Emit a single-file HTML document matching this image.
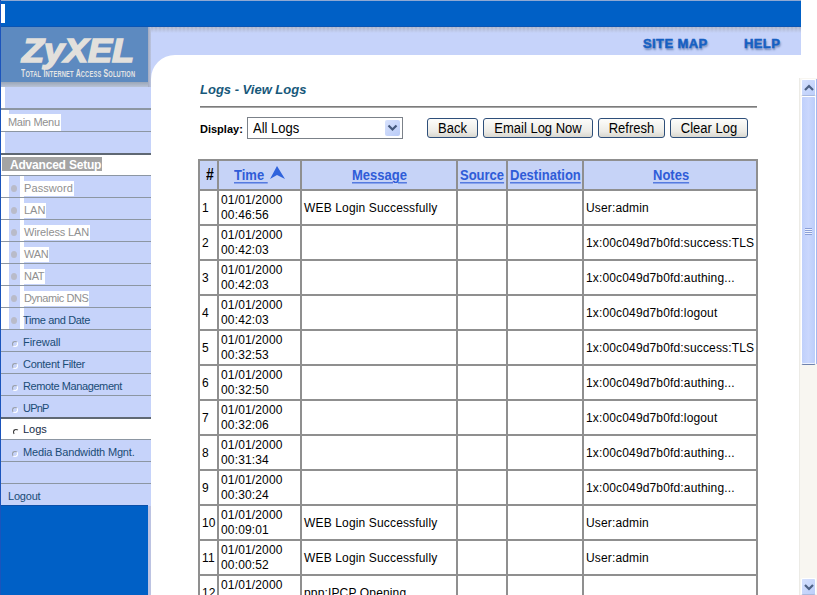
<!DOCTYPE html>
<html><head><meta charset="utf-8">
<style>
*{margin:0;padding:0;box-sizing:border-box}
html,body{width:817px;height:595px;overflow:hidden;background:#fff;font-family:"Liberation Sans",sans-serif}
.a{position:absolute}
#topbar{left:0;top:0;width:801px;height:27px;background:#0060c6;border-top:1px solid #8fa9d3;border-bottom:1px solid #0b55b4}
#topw{left:1px;top:4px;width:4px;height:19px;background:#fff}
#leftedge{left:0;top:0;width:1px;height:595px;background:#1b54bc}
#logo{left:0;top:27px;width:148px;height:55px;background:#5d8ac0}
#logoshadowb{left:0;top:82px;width:151px;height:5px;background:linear-gradient(#9aa6b8,#b9c3d6)}
#logoshadowr{left:148px;top:27px;width:3px;height:60px;background:linear-gradient(90deg,#a3abbf,#bcc5e0)}
#strip{left:151px;top:27px;width:650px;height:28px;background:#c6d3fa}
#stripsh{left:151px;top:27px;width:650px;height:6px;background:linear-gradient(rgba(198,211,250,0) 0%,#c6d3fa 100%),repeating-linear-gradient(90deg,#adb4c8 0 2px,#b7bed2 2px 4px)}
#content{left:151px;top:55px;width:649px;height:540px;background:#fff;border-top-left-radius:24px}
#corner{left:151px;top:55px;width:30px;height:30px;background:#c6d3fa}
.nav{font:bold 13px "Liberation Sans",sans-serif;letter-spacing:.4px;color:#1660c2;-webkit-text-stroke:.5px #1660c2;text-shadow:1px 2px 2px rgba(20,50,110,.5)}
/* sidebar */
#side{left:1px;top:87px;width:150px;height:419px;background:#c6d3fa}
.sep{position:absolute;left:1px;width:150px;background:#8c96a2}
.wcol{position:absolute;background:#fff}
.mt{position:absolute;font-size:11px;white-space:nowrap;line-height:13px}
.g{color:#909090;background:#fff}
.b{color:#1a4c76;letter-spacing:-.2px}
.ico{position:absolute;width:6px;height:6px;border-radius:50%;border:1px solid #9aa0a8;border-bottom-color:#fff;border-right-color:#fff}
#sideblue{left:0;top:505px;width:148px;height:90px;background:#0060c6;border-top:1px solid #0b4fa8}
#sidebluer{left:148px;top:506px;width:3px;height:89px;background:#c6d3fa}
/* content */
#title{left:200px;top:82px;font:italic bold 13px "Liberation Sans",sans-serif;color:#17587a;white-space:nowrap}
#hr{left:200px;top:106px;width:557px;height:2px;background:linear-gradient(#7c7c7c 50%,#a6a6a6 50%)}
#disp{left:200px;top:123px;font:bold 11px "Liberation Sans",sans-serif;color:#000}
#sel{left:247px;top:117px;width:156px;height:22px;border:1px solid #7b8189;background:#fff}
#seltxt{left:253px;top:121px;font-size:13px;color:#000;white-space:nowrap}
#selbtn{left:385px;top:120px;width:15px;height:16px;background:linear-gradient(135deg,#d8e2fd,#b9cbf7);border-radius:2px}
.btn{position:absolute;top:118px;height:20px;border:1px solid #2e4f7a;border-radius:3px;background:linear-gradient(#fdfdfb,#ecebe6 70%,#d9d7cf);font-size:13px;color:#000;text-align:center;line-height:19px}
/* table */
#tbl{left:198px;top:159px;width:561px;height:436px;background:#fff}
.hl{position:absolute;background:#8f8f8f}
.th{position:absolute;top:161px;height:28px;background:#c6d3f7}
.hd{position:absolute;font:bold 13px "Liberation Sans",sans-serif;color:#2f5cd8;text-decoration:underline;white-space:nowrap;top:168px;transform:scaleY(1.13);transform-origin:0 12px;text-underline-offset:2px}
.td{position:absolute;font-size:12px;color:#000;white-space:nowrap;line-height:14px;letter-spacing:.15px}
#scroll{left:799px;top:78px;width:18px;height:517px;background:#f8f6f1}
#logotxt{left:22px;top:32px;font:italic bold 33px "Liberation Sans",sans-serif;color:#e2e0dc;-webkit-text-stroke:1.6px #e2e0dc;transform:scaleX(1.09);transform-origin:0 0;line-height:38px;white-space:nowrap}
#logosub{left:21px;top:69px;font:bold 10px "Liberation Sans",sans-serif;color:#e4e4e4;white-space:nowrap;transform:scaleX(.685);transform-origin:0 0;line-height:10px;letter-spacing:.3px}
#logosub span{font-size:8.3px}
#adv{left:2px;top:157px;width:100px;height:14px;background:#a4a4a4;color:#fff;font:bold 12px "Liberation Sans",sans-serif;line-height:17px;padding-left:8px;letter-spacing:-.2px;white-space:nowrap}
.k{color:#152c46}
.ico2{position:absolute;width:6px;height:7px;border-radius:50%;background:#b9bbc9}
.sel{border-width:1.5px;border-color:#383838 #fff #fff #383838}
.sbtn{left:801px;width:15px;height:17px;border-bottom-color:#a9b9de!important;background:linear-gradient(135deg,#d5e0fd,#bccefa);border:1px solid #fff;border-radius:2px}
.sbtn svg{position:absolute;left:0;top:0}
#thumb{left:801px;top:96px;width:15px;height:269px;background:linear-gradient(90deg,#c0d0fb,#cad7fd 50%,#bccdfa);border:1px solid #fff;border-bottom:1px solid #6f82ad;box-shadow:inset 0 -1px 0 #eef2ff;border-radius:2px}
#grip{position:absolute;left:3px;top:131px;width:7px;height:7px;background:repeating-linear-gradient(#8b9fd8 0 1px,#eef2fd 1px 2px)}
#selbtn svg{position:absolute;left:0;top:0}

.btn span{display:inline-block;transform:scaleY(1.12);transform-origin:0 14px}
#seltxt{transform:scaleY(1.1);transform-origin:0 12px}

</style></head><body>
<div class="a" id="topbar"></div>
<div class="a" id="topw"></div>
<div class="a" id="logo"></div>
<div class="a" id="logotxt">ZyXEL</div>
<div class="a" id="logosub">T<span>OTAL</span> I<span>NTERNET</span> A<span>CCESS</span> S<span>OLUTION</span></div>
<div class="a" id="logoshadowb"></div>
<div class="a" id="logoshadowr"></div>
<div class="a" id="strip"></div>
<div class="a" id="stripsh"></div>
<div class="a" id="corner"></div>
<div class="a" id="content"></div>
<div class="a nav" style="left:643px;top:36px">SITE MAP</div>
<div class="a nav" style="left:744px;top:36px">HELP</div>
<div class="a" id="side"></div>
<div class="wcol" style="left:1px;top:87px;width:4px;height:21px"></div>
<div class="wcol" style="left:1px;top:110px;width:8px;height:21px"></div>
<div class="mt g" style="left:8px;top:114px;padding:2px 1px 2px 0;letter-spacing:-.3px">Main Menu</div>
<div class="wcol" style="left:1px;top:132px;width:4px;height:21px"></div>
<div class="wcol" style="left:1px;top:155px;width:150px;height:20px"></div>
<div class="a" id="adv">Advanced Setup</div>
<div class="wcol" style="left:1px;top:176px;width:8px;height:21px"></div>
<div class="wcol" style="left:20px;top:176px;width:4px;height:21px"></div>
<div class="ico2" style="left:11px;top:185px"></div>
<div class="mt g" style="left:24px;top:181px;padding:1px 1px 1px 0;letter-spacing:0.09px">Password</div>
<div class="wcol" style="left:1px;top:198px;width:8px;height:21px"></div>
<div class="wcol" style="left:20px;top:198px;width:4px;height:21px"></div>
<div class="ico2" style="left:11px;top:207px"></div>
<div class="mt g" style="left:24px;top:203px;padding:1px 1px 1px 0;letter-spacing:0px">LAN</div>
<div class="wcol" style="left:1px;top:220px;width:8px;height:21px"></div>
<div class="wcol" style="left:20px;top:220px;width:4px;height:21px"></div>
<div class="ico2" style="left:11px;top:229px"></div>
<div class="mt g" style="left:24px;top:225px;padding:1px 1px 1px 0;letter-spacing:-0.13px">Wireless LAN</div>
<div class="wcol" style="left:1px;top:242px;width:8px;height:21px"></div>
<div class="wcol" style="left:20px;top:242px;width:4px;height:21px"></div>
<div class="ico2" style="left:11px;top:251px"></div>
<div class="mt g" style="left:24px;top:247px;padding:1px 1px 1px 0;letter-spacing:-0.3px">WAN</div>
<div class="wcol" style="left:1px;top:264px;width:8px;height:21px"></div>
<div class="wcol" style="left:20px;top:264px;width:4px;height:21px"></div>
<div class="ico2" style="left:11px;top:273px"></div>
<div class="mt g" style="left:24px;top:269px;padding:1px 1px 1px 0;letter-spacing:-0.3px">NAT</div>
<div class="wcol" style="left:1px;top:286px;width:8px;height:21px"></div>
<div class="wcol" style="left:20px;top:286px;width:4px;height:21px"></div>
<div class="ico2" style="left:11px;top:295px"></div>
<div class="mt g" style="left:24px;top:291px;padding:1px 1px 1px 0;letter-spacing:-0.43px">Dynamic DNS</div>
<div class="wcol" style="left:1px;top:308px;width:8px;height:21px"></div>
<div class="wcol" style="left:20px;top:308px;width:4px;height:21px"></div>
<div class="ico2" style="left:11px;top:317px"></div>
<div class="mt b" style="left:23px;top:314px;letter-spacing:-0.36px">Time and Date</div>
<div class="ico" style="left:12px;top:341px"></div>
<div class="mt b" style="left:23px;top:336px;letter-spacing:-0.05px">Firewall</div>
<div class="ico" style="left:12px;top:363px"></div>
<div class="mt b" style="left:23px;top:358px;letter-spacing:-0.29px">Content Filter</div>
<div class="ico" style="left:12px;top:385px"></div>
<div class="mt b" style="left:23px;top:380px;letter-spacing:-0.4px">Remote Management</div>
<div class="ico" style="left:12px;top:407px"></div>
<div class="mt b" style="left:23px;top:402px;letter-spacing:-0.8px">UPnP</div>
<div class="wcol" style="left:1px;top:418px;width:150px;height:21px"></div>
<div class="ico sel" style="left:13px;top:429px"></div>
<div class="mt k" style="left:23px;top:423px;letter-spacing:0px">Logs</div>
<div class="ico" style="left:12px;top:451px"></div>
<div class="mt b" style="left:23px;top:446px;letter-spacing:-0.16px">Media Bandwidth Mgnt.</div>
<div class="sep" style="top:108px;height:2px;background:#8c96a2"></div>
<div class="sep" style="top:131px;height:1px;background:#8c96a2"></div>
<div class="sep" style="top:153px;height:2px;background:#5f6873"></div>
<div class="sep" style="top:175px;height:1px;background:#8c96a2"></div>
<div class="sep" style="top:197px;height:1px;background:#8c96a2"></div>
<div class="sep" style="top:219px;height:1px;background:#8c96a2"></div>
<div class="sep" style="top:241px;height:1px;background:#8c96a2"></div>
<div class="sep" style="top:263px;height:1px;background:#8c96a2"></div>
<div class="sep" style="top:285px;height:1px;background:#8c96a2"></div>
<div class="sep" style="top:307px;height:1px;background:#8c96a2"></div>
<div class="sep" style="top:329px;height:1px;background:#8c96a2"></div>
<div class="sep" style="top:351px;height:1px;background:#8c96a2"></div>
<div class="sep" style="top:373px;height:1px;background:#8c96a2"></div>
<div class="sep" style="top:395px;height:1px;background:#8c96a2"></div>
<div class="sep" style="top:417px;height:1px;background:#8c96a2"></div>
<div class="sep" style="top:439px;height:1px;background:#8c96a2"></div>
<div class="sep" style="top:461px;height:1px;background:#8c96a2"></div>
<div class="sep" style="top:483px;height:1px;background:#8c96a2"></div>
<div class="sep" style="top:417px;height:2px;background:#5f6873"></div>
<div class="mt b" style="left:8px;top:490px;letter-spacing:-.2px">Logout</div>
<div class="a" id="sideblue"></div>
<div class="a" style="left:148px;top:506px;width:3px;height:89px;background:#bcc3e2"></div>
<div class="a" id="leftedge"></div>
<div class="a" id="title">Logs - View Logs</div>
<div class="a" id="hr"></div>
<div class="a" id="disp">Display:</div>
<div class="a" id="sel"></div>
<div class="a" id="seltxt">All Logs</div>
<div class="a" id="selbtn"><svg width="15" height="16" viewBox="0 0 15 16"><path d="M3.5 5.5 L7.5 9.5 L11.5 5.5" fill="none" stroke="#44587c" stroke-width="2.2"/></svg></div>
<div class="btn" style="left:427px;width:51px"><span>Back</span></div>
<div class="btn" style="left:483px;width:110px"><span>Email Log Now</span></div>
<div class="btn" style="left:598px;width:67px"><span>Refresh</span></div>
<div class="btn" style="left:670px;width:78px"><span>Clear Log</span></div>
<div class="a" style="left:198px;top:159px;width:560px;height:32px;background:#c6d3f7"></div>
<div class="hl" style="left:198px;top:159px;width:560px;height:2px"></div>
<div class="hl" style="left:198px;top:189px;width:560px;height:2px"></div>
<div class="hl" style="left:198px;top:224px;width:560px;height:2px"></div>
<div class="hl" style="left:198px;top:259px;width:560px;height:2px"></div>
<div class="hl" style="left:198px;top:294px;width:560px;height:2px"></div>
<div class="hl" style="left:198px;top:329px;width:560px;height:2px"></div>
<div class="hl" style="left:198px;top:364px;width:560px;height:2px"></div>
<div class="hl" style="left:198px;top:399px;width:560px;height:2px"></div>
<div class="hl" style="left:198px;top:434px;width:560px;height:2px"></div>
<div class="hl" style="left:198px;top:469px;width:560px;height:2px"></div>
<div class="hl" style="left:198px;top:504px;width:560px;height:2px"></div>
<div class="hl" style="left:198px;top:539px;width:560px;height:2px"></div>
<div class="hl" style="left:198px;top:574px;width:560px;height:2px"></div>
<div class="hl" style="left:198px;top:159px;width:2px;height:436px"></div>
<div class="hl" style="left:217px;top:159px;width:2px;height:436px"></div>
<div class="hl" style="left:300px;top:159px;width:2px;height:436px"></div>
<div class="hl" style="left:456px;top:159px;width:2px;height:436px"></div>
<div class="hl" style="left:506px;top:159px;width:2px;height:436px"></div>
<div class="hl" style="left:582px;top:159px;width:2px;height:436px"></div>
<div class="hl" style="left:756px;top:159px;width:2px;height:436px"></div>
<div class="a hd" style="left:206px;top:167px;color:#000;text-decoration:none;font-size:14px">#</div>
<div class="a hd" style="left:234px">Time&nbsp;</div>
<div class="a" style="left:269px;top:166px"><svg width="17" height="14" viewBox="0 0 17 14"><path d="M8 0 L16 13 L8 9 L1 13 Z" fill="#2f63dc"/></svg></div>
<div class="a hd" style="left:352px">Message</div>
<div class="a hd" style="left:460px">Source</div>
<div class="a hd" style="left:510px">Destination</div>
<div class="a hd" style="left:653px">Notes</div>
<div class="td" style="left:202px;top:201px">1</div>
<div class="td" style="left:221px;top:193px;line-height:15px">01/01/2000<br>00:46:56</div>
<div class="td" style="left:304px;top:201px">WEB Login Successfully</div>
<div class="td" style="left:586px;top:201px">User:admin</div>
<div class="td" style="left:202px;top:236px">2</div>
<div class="td" style="left:221px;top:228px;line-height:15px">01/01/2000<br>00:42:03</div>
<div class="td" style="left:586px;top:236px">1x:00c049d7b0fd:success:TLS</div>
<div class="td" style="left:202px;top:271px">3</div>
<div class="td" style="left:221px;top:263px;line-height:15px">01/01/2000<br>00:42:03</div>
<div class="td" style="left:586px;top:271px">1x:00c049d7b0fd:authing...</div>
<div class="td" style="left:202px;top:306px">4</div>
<div class="td" style="left:221px;top:298px;line-height:15px">01/01/2000<br>00:42:03</div>
<div class="td" style="left:586px;top:306px">1x:00c049d7b0fd:logout</div>
<div class="td" style="left:202px;top:341px">5</div>
<div class="td" style="left:221px;top:333px;line-height:15px">01/01/2000<br>00:32:53</div>
<div class="td" style="left:586px;top:341px">1x:00c049d7b0fd:success:TLS</div>
<div class="td" style="left:202px;top:376px">6</div>
<div class="td" style="left:221px;top:368px;line-height:15px">01/01/2000<br>00:32:50</div>
<div class="td" style="left:586px;top:376px">1x:00c049d7b0fd:authing...</div>
<div class="td" style="left:202px;top:411px">7</div>
<div class="td" style="left:221px;top:403px;line-height:15px">01/01/2000<br>00:32:06</div>
<div class="td" style="left:586px;top:411px">1x:00c049d7b0fd:logout</div>
<div class="td" style="left:202px;top:446px">8</div>
<div class="td" style="left:221px;top:438px;line-height:15px">01/01/2000<br>00:31:34</div>
<div class="td" style="left:586px;top:446px">1x:00c049d7b0fd:authing...</div>
<div class="td" style="left:202px;top:481px">9</div>
<div class="td" style="left:221px;top:473px;line-height:15px">01/01/2000<br>00:30:24</div>
<div class="td" style="left:586px;top:481px">1x:00c049d7b0fd:authing...</div>
<div class="td" style="left:202px;top:516px">10</div>
<div class="td" style="left:221px;top:508px;line-height:15px">01/01/2000<br>00:09:01</div>
<div class="td" style="left:304px;top:516px">WEB Login Successfully</div>
<div class="td" style="left:586px;top:516px">User:admin</div>
<div class="td" style="left:202px;top:551px">11</div>
<div class="td" style="left:221px;top:543px;line-height:15px">01/01/2000<br>00:00:52</div>
<div class="td" style="left:304px;top:551px">WEB Login Successfully</div>
<div class="td" style="left:586px;top:551px">User:admin</div>
<div class="td" style="left:202px;top:586px">12</div>
<div class="td" style="left:221px;top:578px;line-height:15px">01/01/2000<br></div>
<div class="td" style="left:304px;top:586px">ppp:IPCP Opening</div>
<div class="a" id="scroll"></div>
<div class="a sbtn" style="top:79px"><svg width="14" height="16" viewBox="0 0 14 16"><path d="M3 10 L7 6 L11 10" fill="none" stroke="#4d6185" stroke-width="2.2"/></svg></div>
<div class="a" id="thumb"><div id="grip"></div></div>
<div class="a sbtn" style="top:578px"><svg width="14" height="16" viewBox="0 0 14 16"><path d="M3 6 L7 10 L11 6" fill="none" stroke="#4d6185" stroke-width="2.2"/></svg></div>
<div class="a" style="left:816px;top:79px;width:1px;height:285px;background:#a4b8ee"></div>
<div class="a" style="left:799px;top:78px;width:1px;height:517px;background:#ecebe6"></div>
</body></html>
